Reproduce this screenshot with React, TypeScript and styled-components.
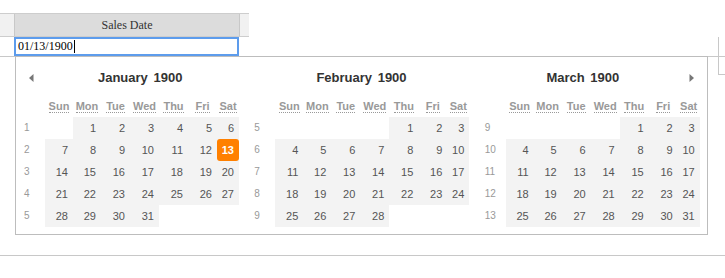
import React from 'react'
import styled, { createGlobalStyle } from 'styled-components'

const GlobalStyle = createGlobalStyle`
  body {
    margin: 0;
    background: #fff;
    font-family: "Liberation Serif", "Times New Roman", serif;
  }
`

const Page = styled.div`
  position: relative;
  width: 725px;
  height: 278px;
  padding-top: 13px;
  box-sizing: border-box;
  overflow: hidden;
`

// grid header with the single "Sales Date" column
const HeaderRow = styled.div`
  display: flex;
  width: 249px;
  height: 24px;
  box-sizing: border-box;
  border-top: 1px solid #cdcdcd;
  border-bottom: 1px solid #cdcdcd;
  background: #f1f1f1;
`

const HeaderCell = styled.div<{ $w: number; $main?: boolean }>`
  width: ${p => p.$w}px;
  box-sizing: border-box;
  display: flex;
  align-items: center;
  justify-content: center;
  font-size: 12px;
  color: #333;
  background: ${p => (p.$main ? '#dcdcdc' : 'transparent')};
  border-left: ${p => (p.$main ? '1px solid #c8c8c8' : 'none')};
  border-right: ${p => (p.$main ? '1px solid #c8c8c8' : 'none')};
`

const FilterRow = styled.div`
  display: flex;
  height: 20px;
  box-sizing: border-box;
  border-bottom: 1px solid #c8c8c8;
`

const Spacer = styled.div<{ $w: number }>`
  width: ${p => p.$w}px;
  flex: none;
`

const Filler = styled.div`
  flex: 1;
`

const EndCell = styled.div<{ $h?: number; $bottom?: boolean }>`
  width: 7px;
  height: ${p => (p.$h ? `${p.$h}px` : 'auto')};
  box-sizing: border-box;
  border-left: 1px solid #c8c8c8;
  border-bottom: ${p => (p.$bottom ? '1px solid #c8c8c8' : 'none')};
`

const DateBox = styled.div`
  width: 225px;
  height: 19px;
  box-sizing: border-box;
  border: 2px solid #5d9cec;
  padding-left: 2px;
  display: flex;
  align-items: center;
  font-size: 12px;
  color: #000;
`

const Caret = styled.span`
  display: inline-block;
  width: 1px;
  height: 13px;
  margin-left: 1px;
  background: #000;
`

const Body = styled.div`
  height: 199px;
  box-sizing: border-box;
  border-bottom: 1px solid #c8c8c8;
`

const TopStrip = styled.div`
  display: flex;
  justify-content: flex-end;
`

// the three-month popup that drops from the date editor
const Popup = styled.div`
  position: absolute;
  left: 15px;
  top: 56px;
  z-index: 2;
  width: 693px;
  height: 179px;
  box-sizing: border-box;
  border: 1px solid #bdbdbd;
  background: #fff;
  display: grid;
  grid-template-columns: repeat(3, 1fr);
  font-family: "Liberation Sans", Arial, sans-serif;
`

const Month = styled.div`
  display: flex;
  flex-direction: column;
  min-width: 0;
`

const MonthHead = styled.div`
  height: 41px;
  display: flex;
  align-items: center;
`

const NavSlot = styled.div<{ $side: 'prev' | 'next' }>`
  width: 18px;
  flex: none;
  display: flex;
  align-items: center;
  justify-content: ${p => (p.$side === 'prev' ? 'flex-end' : 'flex-start')};
  padding-top: 1px;
`

const Title = styled.div`
  flex: 1;
  text-align: center;
  font-size: 13px;
  font-weight: bold;
  color: #333;
  line-height: 16px;
  padding-top: 1px;
  word-spacing: 2px;
`

const DayGrid = styled.div`
  display: grid;
  grid-template-columns: 29px 28px 28px 29px 29px 29px 29px 22px;
  grid-template-rows: 19px repeat(5, 22px);
`

const DayName = styled.div`
  text-align: center;
  font-size: 11px;
  font-weight: bold;
  color: #999;
  line-height: 16px;
  padding-top: 0px;

  abbr {
    text-decoration: none;
    border-bottom: 1px dotted #999;
  }
`

const WeekNo = styled.div`
  padding-left: 8px;
  font-size: 10px;
  color: #999;
  line-height: 22px;
`

const DayCell = styled.div<{ $filled: boolean }>`
  background: ${p => (p.$filled ? '#f3f3f3' : 'transparent')};
  font-size: 11px;
  color: #555;
  line-height: 22px;
  text-align: right;
  padding-right: 5px;
`

const SelectedDay = styled.div`
  margin-right: -5px;
  padding-right: 5px;
  height: 22px;
  border-radius: 3px;
  background: #ff8000;
  color: #fff;
  font-weight: bold;
`

const NavArrow = ({ dir }: { dir: 'prev' | 'next' }) => (
  <svg width="5" height="8" viewBox="0 0 5 8">
    <polygon points={dir === 'prev' ? '4.5,0 4.5,8 0,4' : '0.5,0 0.5,8 5,4'} fill="#777" />
  </svg>
)

const DAY_NAMES = [
  ['Sun', 'Sunday'],
  ['Mon', 'Monday'],
  ['Tue', 'Tuesday'],
  ['Wed', 'Wednesday'],
  ['Thu', 'Thursday'],
  ['Fri', 'Friday'],
  ['Sat', 'Saturday'],
]

const MONTH_NAMES = ['January', 'February', 'March']
const YEAR = 1900
const SELECTED = { month: 0, day: 13 }

// weeks of a month, each a list of 7 day numbers (0 = empty)
const buildWeeks = (month: number) => {
  const first = new Date(Date.UTC(YEAR, month, 1))
  const daysIn = new Date(Date.UTC(YEAR, month + 1, 0)).getUTCDate()
  const jan1Dow = new Date(Date.UTC(YEAR, 0, 1)).getUTCDay()
  const startDoy = Math.round((first.getTime() - Date.UTC(YEAR, 0, 1)) / 86400000)
  const weeks: { no: number; days: number[] }[] = []
  let days: number[] = new Array(first.getUTCDay()).fill(0)
  for (let d = 1; d <= daysIn; d++) {
    days.push(d)
    if (days.length === 7) {
      weeks.push({ no: 0, days })
      days = []
    }
  }
  if (days.length) {
    while (days.length < 7) days.push(0)
    weeks.push({ no: 0, days })
  }
  const firstWeek = Math.floor((startDoy + jan1Dow) / 7) + 1
  return weeks.map((w, i) => ({ ...w, no: firstWeek + i }))
}

const MonthView: React.FC<{ month: number; prev?: boolean; next?: boolean }> = ({
  month,
  prev,
  next,
}) => {
  const weeks = buildWeeks(month)
  return (
    <Month>
      <MonthHead>
        {prev && (
          <NavSlot $side="prev">
            <NavArrow dir="prev" />
          </NavSlot>
        )}
        <Title>
          {MONTH_NAMES[month]} {YEAR}
        </Title>
        {next && (
          <NavSlot $side="next">
            <NavArrow dir="next" />
          </NavSlot>
        )}
      </MonthHead>
      <DayGrid>
        <div />
        {DAY_NAMES.map(([short, full]) => (
          <DayName key={short}>
            <abbr title={full}>{short}</abbr>
          </DayName>
        ))}
        {weeks.map(w => (
          <React.Fragment key={w.no}>
            <WeekNo>{w.no}</WeekNo>
            {w.days.map((d, i) => (
              <DayCell key={i} $filled={d > 0}>
                {d > 0 && month === SELECTED.month && d === SELECTED.day ? (
                  <SelectedDay>{d}</SelectedDay>
                ) : d > 0 ? (
                  d
                ) : null}
              </DayCell>
            ))}
          </React.Fragment>
        ))}
      </DayGrid>
    </Month>
  )
}

const App: React.FC = () => {
  return (
    <Page>
      <GlobalStyle />
      <HeaderRow>
        <HeaderCell $w={14} />
        <HeaderCell $w={226} $main>
          Sales Date
        </HeaderCell>
        <HeaderCell $w={9} />
      </HeaderRow>
      <FilterRow>
        <Spacer $w={14} />
        <DateBox>
          01/13/1900
          <Caret />
        </DateBox>
        <Filler />
        <EndCell />
      </FilterRow>
      <Body>
        <TopStrip>
          <EndCell $h={18} $bottom />
        </TopStrip>
      </Body>
      <Popup>
        <MonthView month={0} prev />
        <MonthView month={1} />
        <MonthView month={2} next />
      </Popup>
    </Page>
  )
}

export default App
